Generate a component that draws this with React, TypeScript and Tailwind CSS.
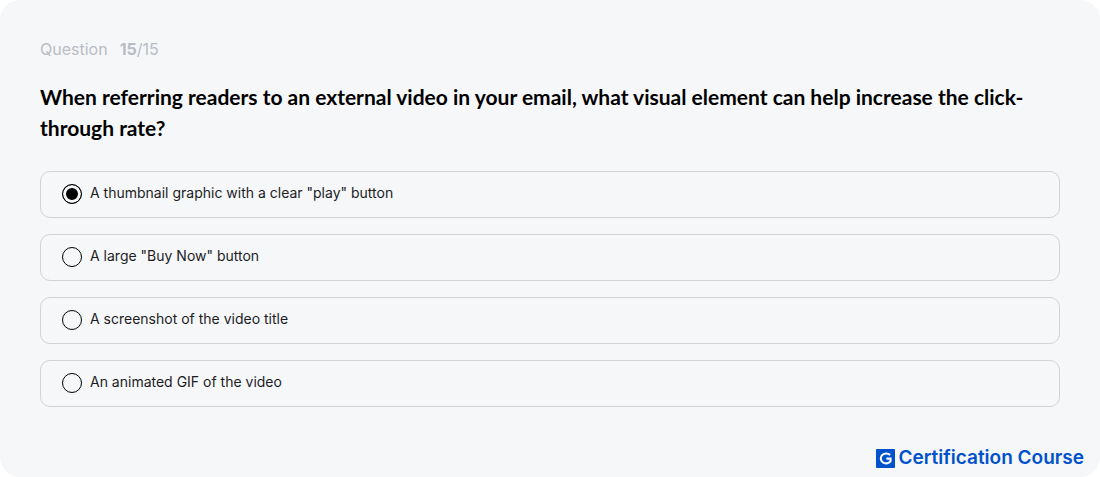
import React, { useState } from 'react'

const answers = [
    'A thumbnail graphic with a clear "play" button',
    'A large "Buy Now" button',
    'A screenshot of the video title',
    'An animated GIF of the video',
]

const Logo: React.FC = () => {
    return (
        <svg className="h-[19px] w-[19px]" viewBox="0 0 19 19" aria-hidden="true">
            <rect width="19" height="19" rx="1" fill="#0052cc" />
            <path d="M14.1 6.1A5.4 4.9 0 1 0 14.5 12.4V9.6H10.4" fill="none" stroke="#fff" strokeWidth="2.1" />
        </svg>
    )
}

interface AnswerProps {
    text: string
    checked: boolean
    onSelect: () => void
}

const Answer: React.FC<AnswerProps> = ({ text, checked, onSelect }) => {
    return (
        <label className="flex cursor-pointer items-start gap-2 rounded-[10px] border border-[#d0d2d6] px-[21px] pt-3 pb-[13px]">
            <input
                type="radio"
                name="answer"
                checked={checked}
                onChange={onSelect}
                className="h-5 w-5 shrink-0 cursor-pointer appearance-none rounded-full border border-black checked:bg-black checked:shadow-[inset_0_0_0_3px_#f6f7f9]"
            />
            <span className="text-sm leading-[18px] text-[#1c1d1f]">{text}</span>
        </label>
    )
}

const App: React.FC = () => {
    const [selected, setSelected] = useState(0)

    return (
        <main className="rounded-[20px] bg-[#f6f7f9] px-10 pt-[37px] pb-[5px] font-['Inter',sans-serif]">
            <p className="text-base text-[#b8bdc5]">
                <span className="mr-3">Question</span>
                <b className="font-bold">15</b>/15
            </p>
            <fieldset>
                <legend className="pt-5 font-['Lato',sans-serif] text-[21px] leading-[31px] font-bold text-black">
                    When referring readers to an external video in your email, what visual element can help increase the click-through rate?
                </legend>
                <div className="mt-7 flex flex-col gap-4">
                    {answers.map((text, i) => (
                        <Answer key={text} text={text} checked={selected === i} onSelect={() => setSelected(i)} />
                    ))}
                </div>
            </fieldset>
            <footer className="mt-[37px] -mr-6 flex items-center justify-end gap-[3px] text-[19px] leading-7 font-semibold text-[#0052cc]">
                <Logo />
                <span>Certification Course</span>
            </footer>
        </main>
    )
}

export default App
